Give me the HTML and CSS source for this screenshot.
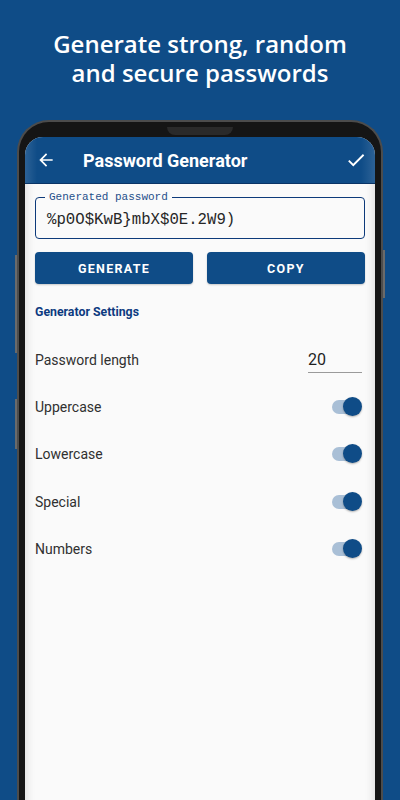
FILE: index.html
```html
<!DOCTYPE html>
<html lang="en">
<head>
    <meta charset="UTF-8">
    <meta name="viewport" content="width=device-width, initial-scale=1.0">
    <title>Password Generator</title>
    <link rel="stylesheet" href="styles.css">
</head>
<body>

    <h1 class="headline">
        <span class="line">Generate strong, random</span>
        <span class="line">and secure passwords</span>
    </h1>

    <div class="phone">
        <span class="side-btn left-1"></span>
        <span class="side-btn left-2"></span>
        <span class="side-btn right-1"></span>
        <div class="notch"></div>

        <div class="screen">
            <div class="app-bar">
                <svg class="icon" width="20" height="20" viewBox="0 0 24 24">
                    <path d="M20 11H7.83l5.59-5.59L12 4l-8 8 8 8 1.41-1.41L7.83 13H20v-2z" fill="#fff"/>
                </svg>
                <span class="app-title">Password Generator</span>
                <svg class="icon check" width="22" height="22" viewBox="0 0 24 24">
                    <path d="M9 16.17L4.83 12l-1.42 1.41L9 19 21 7l-1.41-1.41z" fill="#fff"/>
                </svg>
            </div>

            <div class="content">
                <div class="field">
                    <span class="field-label">Generated password</span>
                    <span class="field-value">%p0O$KwB}mbX$0E.2W9)</span>
                </div>

                <div class="buttons">
                    <button class="btn">GENERATE</button>
                    <button class="btn">COPY</button>
                </div>

                <h3 class="section-title">Generator Settings</h3>

                <div class="settings">
                    <div class="row">
                        <span>Password length</span>
                        <span class="length-input">20</span>
                    </div>
                    <div class="row">
                        <span>Uppercase</span>
                        <span class="switch"></span>
                    </div>
                    <div class="row">
                        <span>Lowercase</span>
                        <span class="switch"></span>
                    </div>
                    <div class="row">
                        <span>Special</span>
                        <span class="switch"></span>
                    </div>
                    <div class="row">
                        <span>Numbers</span>
                        <span class="switch"></span>
                    </div>
                </div>
            </div>
        </div>
    </div>

</body>
</html>
```

FILE: styles.css
```css
/* Store screenshot: blue page with a phone mockup */
body {
    margin: 0;
    background-color: #0f4c87;
    font-family: Roboto, Arial, sans-serif;
    height: 800px;
    overflow: hidden;
}
.headline {
    margin: 0;
    padding-top: 31px;
    text-align: center;
    color: #fff;
    font-family: "Open Sans", "Noto Sans", sans-serif;
    font-weight: 600;
    font-size: 24px;
}
.headline .line {
    display: block;
    height: 29px;
    line-height: 26px;
}
.phone {
    position: relative;
    width: 366px;
    height: 700px;
    margin: 31px auto 0;
    padding: 15px 6px 0;
    background: #151515;
    border: 2px solid #4c4c4c;
    border-bottom: none;
    border-radius: 32px 32px 0 0;
    box-sizing: border-box;
}
.notch {
    position: absolute;
    left: 148px;
    top: 5px;
    width: 66px;
    height: 8px;
    background: #2a2a2a;
    border-radius: 0 0 8px 8px;
}
.side-btn {
    position: absolute;
    width: 2px;
    background: #6a6a6a;
}
.left-1 { left: -4px; top: 133px; height: 98px; }
.left-2 { left: -4px; top: 277px; height: 50px; }
.right-1 { right: -4px; top: 128px; height: 48px; }
.screen {
    height: 100%;
    background: #fafafa;
    border-radius: 18px 18px 0 0;
    overflow: hidden;
    box-shadow: inset 10px 0 8px -8px rgba(0, 0, 0, 0.12), inset -10px 0 8px -8px rgba(0, 0, 0, 0.12);
}
.app-bar {
    display: flex;
    align-items: center;
    height: 46px;
    padding: 0 8px 0 11px;
    background: linear-gradient(to right, rgba(255,255,255,0.12), rgba(255,255,255,0) 12px, rgba(255,255,255,0) 336px, rgba(255,255,255,0.12)), #0f4c87;
    border-bottom: 1px solid #0a3466;
}
.icon {
    flex: none;
}
.app-title {
    flex: 1;
    margin-left: 27px;
    color: #fff;
    font-weight: 700;
    font-size: 18px;
}
.content {
    padding: 13px 10px 0;
}
.field {
    position: relative;
    height: 42px;
    border: 1.5px solid #0d3a7a;
    border-radius: 4px;
    box-sizing: border-box;
    display: flex;
    align-items: center;
    padding: 3px 0 0 11px;
}
.field-label {
    position: absolute;
    left: 9px;
    top: -8px;
    padding: 0 4px;
    background: #fafafa;
    color: #1f4f8a;
    font-family: "Liberation Mono", monospace;
    font-size: 11px;
    line-height: 14px;
}
.field-value {
    font-family: "Liberation Mono", monospace;
    font-size: 15.7px;
    color: #262626;
}
.buttons {
    display: flex;
    gap: 14px;
    margin-top: 13px;
}
.btn {
    flex: 1;
    height: 32px;
    border: none;
    border-radius: 4px;
    background: #0f4c87;
    color: #fff;
    font-family: Roboto, Arial, sans-serif;
    font-weight: 700;
    font-size: 12.5px;
    letter-spacing: 1.3px;
    box-shadow: 0 1px 2px rgba(0, 0, 0, 0.2);
}
.section-title {
    margin: 21px 0 0;
    color: #0d3a80;
    font-size: 12.3px;
    font-weight: 700;
    line-height: 15px;
}
.settings {
    margin-top: 16px;
}
.row {
    display: flex;
    justify-content: space-between;
    align-items: center;
    height: 47.3px;
    color: #303030;
    font-size: 14px;
}
.length-input {
    width: 54px;
    margin-right: 3px;
    margin-top: 4px;
    padding-bottom: 3px;
    border-bottom: 1.5px solid #9a9a9a;
    color: #1f1f1f;
    font-size: 16px;
}
.switch {
    position: relative;
    width: 26px;
    height: 14px;
    margin-right: 7px;
    background: #a9bfd6;
    border-radius: 7px;
}
.switch::after {
    content: "";
    position: absolute;
    right: -4px;
    top: -3px;
    width: 19px;
    height: 19px;
    border-radius: 50%;
    background: #0f4c87;
    box-shadow: 0 1px 2px rgba(0, 0, 0, 0.3);
}
```
